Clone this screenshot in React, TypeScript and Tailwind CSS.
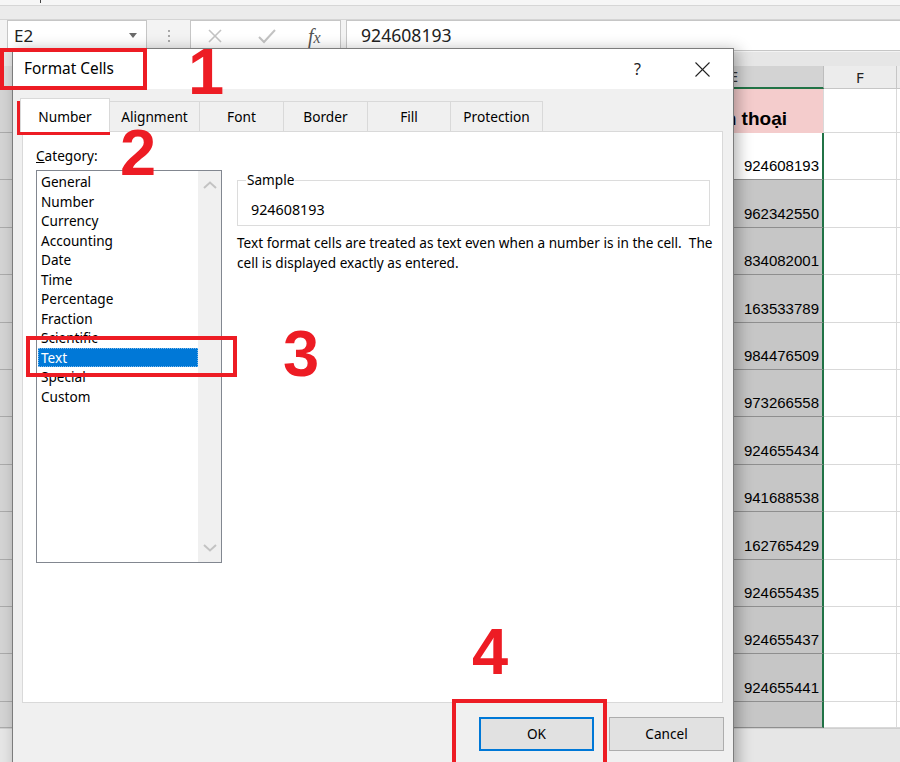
import React from "react";

const nums = [
  "924608193",
  "962342550",
  "834082001",
  "163533789",
  "984476509",
  "973266558",
  "924655434",
  "941688538",
  "162765429",
  "924655435",
  "924655437",
  "924655441",
];

const cats = [
  "General",
  "Number",
  "Currency",
  "Accounting",
  "Date",
  "Time",
  "Percentage",
  "Fraction",
  "Scientific",
  "Text",
  "Special",
  "Custom",
];

const tabs = [
  { label: "Number", w: "w-[90px]", active: true },
  { label: "Alignment", w: "w-[91px]", active: false },
  { label: "Font", w: "w-[85px]", active: false },
  { label: "Border", w: "w-[85px]", active: false },
  { label: "Fill", w: "w-[84px]", active: false },
  { label: "Protection", w: "w-[93px]", active: false },
];

function Chevron({ up }: { up?: boolean }) {
  return (
    <svg width="14" height="8" viewBox="0 0 14 8">
      <polyline
        points={up ? "1,7 7,1.5 13,7" : "1,1 7,6.5 13,1"}
        fill="none"
        stroke="#c3c3c3"
        strokeWidth="2"
      />
    </svg>
  );
}

function SheetRow({
  h,
  num,
  white,
}: {
  h: string;
  num?: string;
  white?: boolean;
}) {
  return (
    <div className={`flex ${h}`}>
      <div className="w-[12px] bg-[#d4d4d4] border-b border-[#ababab]" />
      <div className="w-[633px] bg-white" />
      <div
        className={`w-[179px] border-r-2 border-r-[#217346] border-b border-b-[#8e8e8e] flex items-end justify-end pr-[3px] pb-[4px] font-['Liberation_Sans',Arial,sans-serif] text-[15px] leading-[18px] ${
          white ? "bg-white" : "bg-[#c6c6c6]"
        }`}
      >
        {num}
      </div>
      <div className="w-[73px] bg-white border-b border-r border-[#d9d9d9]" />
      <div className="flex-1 bg-white border-b border-[#d9d9d9]" />
    </div>
  );
}

export default function App() {
  return (
    <div className="relative w-[900px] h-[762px] overflow-hidden bg-[#e6e6e6] font-['Noto_Sans',sans-serif] text-black">
      {/* ribbon bottom edge */}
      <div className="h-[6px] bg-[#f6f6f6] border-b border-[#d6d6d6]">
        <div className="ml-[40px] w-px h-[3px] bg-[#444]" />
      </div>
      <div className="h-[14px] bg-[#ebebeb] border-b border-[#d4d4d4]" />

      {/* formula bar */}
      <div className="h-[32px] flex bg-[#f3f3f3]">
        <div className="ml-[7px] w-[140px] h-[31px] bg-white border border-[#c6c6c6] flex items-center justify-between pl-[6px] pr-[9px]">
          <span className="text-[17px] leading-none text-[#222]">E2</span>
          <svg width="8" height="5" viewBox="0 0 8 5">
            <polygon points="0,0 8,0 4,5" fill="#6a6a6a" />
          </svg>
        </div>
        <div className="w-[43px] flex flex-col items-center justify-center gap-[3px]">
          <div className="w-[2px] h-[2px] bg-[#a8a8a8]" />
          <div className="w-[2px] h-[2px] bg-[#a8a8a8]" />
          <div className="w-[2px] h-[2px] bg-[#a8a8a8]" />
        </div>
        <div className="w-[151px] h-[31px] bg-white border border-[#c6c6c6] flex items-center pl-[16px]">
          <svg width="16" height="16" viewBox="0 0 16 16">
            <line x1="2" y1="2" x2="14" y2="14" stroke="#c3c3c3" strokeWidth="1.6" />
            <line x1="14" y1="2" x2="2" y2="14" stroke="#c3c3c3" strokeWidth="1.6" />
          </svg>
          <svg width="18" height="16" viewBox="0 0 18 16" className="ml-[35px]">
            <polyline points="1,9 6,14 17,2" fill="none" stroke="#c3c3c3" strokeWidth="2" />
          </svg>
          <span className="ml-[32px] font-['Liberation_Serif',serif] italic text-[20px] leading-none text-[#555]">
            f<span className="text-[16px]">x</span>
          </span>
        </div>
        <div className="ml-[5px] flex-1 h-[31px] bg-white border-y border-l border-[#c6c6c6] flex items-center pl-[14px] text-[17.6px] leading-none text-[#222]">
          924608193
        </div>
      </div>
      <div className="h-[14px] bg-[#e6e6e6]" />

      {/* column headers */}
      <div className="flex h-[23px]">
        <div className="w-[12px] bg-[#dcdcdc] border-b border-[#ababab]" />
        <div className="w-[633px] bg-[#e6e6e6]" />
        <div className="w-[179px] bg-[#d3d3d3] border-b-2 border-[#217346] border-r border-r-[#bdbdbd] flex items-center justify-center text-[15px] text-[#333]">
          E
        </div>
        <div className="w-[73px] bg-[#ececec] border-b border-r border-[#c6c6c6] flex items-center justify-center text-[15px] text-[#222]">
          F
        </div>
        <div className="flex-1 bg-[#ececec] border-b border-[#c6c6c6]" />
      </div>

      {/* header row */}
      <div className="flex h-[44px]">
        <div className="w-[12px] bg-[#d4d4d4] border-b border-[#ababab]" />
        <div className="w-[633px] bg-white" />
        <div className="w-[179px] bg-[#f4cccc] border-r border-[#d9d9d9] flex items-end justify-end pr-[36px] pb-[3px] font-['Liberation_Sans',Arial,sans-serif] font-bold text-[19px] leading-[22px] whitespace-nowrap">
          Số điện thoại
        </div>
        <div className="w-[73px] bg-white border-b border-r border-[#d9d9d9]" />
        <div className="flex-1 bg-white border-b border-[#d9d9d9]" />
      </div>

      {nums.map((n, i) => (
        <SheetRow key={i} h="h-[47.42px]" num={n} white={i === 0} />
      ))}
      <SheetRow h="h-[26px]" />

      {/* sheet tabs bar */}
      <div className="h-[40px] bg-[#e6e6e6] border-t border-[#cfcfcf]" />

      {/* Format Cells dialog */}
      <div className="absolute left-[12px] top-[48px] w-[722px] h-[730px] bg-[#f0f0f0] border border-[#7c7c7c] shadow-[4px_2px_14px_rgba(0,0,0,0.3)] flex flex-col">
        <div className="h-[40px] bg-white flex items-center">
          <span className="pl-[11px] text-[15.4px]">Format Cells</span>
          <span className="ml-auto text-[16px] text-[#222]">?</span>
          <svg width="15" height="15" viewBox="0 0 15 15" className="ml-[54px] mr-[23px]">
            <line x1="0.5" y1="0.5" x2="14.5" y2="14.5" stroke="#222" strokeWidth="1.1" />
            <line x1="14.5" y1="0.5" x2="0.5" y2="14.5" stroke="#222" strokeWidth="1.1" />
          </svg>
        </div>

        <div className="h-[42px] flex items-end pl-[7px]">
          {tabs.map((t) =>
            t.active ? (
              <div
                key={t.label}
                className={`${t.w} h-[34px] -mb-px relative z-10 bg-white border-x border-t border-[#d9d9d9] flex items-center justify-center text-[13.7px] pt-[4px]`}
              >
                {t.label}
              </div>
            ) : (
              <div
                key={t.label}
                className={`${t.w} h-[30px] -ml-px bg-[#f0f0f0] border-x border-t border-[#d9d9d9] flex items-center justify-center text-[13.7px] pt-[2px]`}
              >
                {t.label}
              </div>
            )
          )}
        </div>

        <div className="ml-[9px] w-[701px] h-[572px] bg-white border border-[#d9d9d9] flex">
          <div className="pl-[13px] pt-[14px]">
            <div className="text-[13.6px] leading-[20px]">
              <span className="underline">C</span>ategory:
            </div>
            <div className="mt-[4px] w-[186px] h-[393px] border border-[#828790] flex">
              <div className="flex-1 pt-[1px] pl-[1px]">
                {cats.map((c) =>
                  c === "Text" ? (
                    <div
                      key={c}
                      className="h-[19.5px] leading-[19.5px] bg-[#0078d7] text-white pl-[3px] text-[13.6px] outline outline-1 outline-dotted outline-[#7ab8ec] -outline-offset-1"
                    >
                      {c}
                    </div>
                  ) : (
                    <div key={c} className="h-[19.5px] leading-[19.5px] pl-[3px] text-[13.6px]">
                      {c}
                    </div>
                  )
                )}
              </div>
              <div className="w-[23px] bg-[#f0f0f0] flex flex-col items-center justify-between pt-[10px] pb-[10px]">
                <Chevron up />
                <Chevron />
              </div>
            </div>
          </div>

          <div className="ml-[15px] pt-[38px] w-[473px]">
            <fieldset className="border border-[#dcdcdc] pl-[13px] pb-[5px]">
              <legend className="ml-[-5px] px-[1px] text-[13.6px] leading-[20px]">Sample</legend>
              <div className="pt-[10px] text-[14.3px] leading-[20px]">924608193</div>
            </fieldset>
            <div className="mt-[7px] text-[13.6px] leading-[20px] whitespace-pre">
              <div>Text format cells are treated as text even when a number is in the cell.  The</div>
              <div>cell is displayed exactly as entered.</div>
            </div>
          </div>
        </div>

        <div className="flex justify-end gap-[15px] pt-[14px] pr-[9px]">
          <div className="w-[115px] h-[34px] bg-[#e1e1e1] border-2 border-[#0078d7] flex items-center justify-center text-[13.6px]">
            OK
          </div>
          <div className="w-[115px] h-[34px] bg-[#e1e1e1] border border-[#adadad] flex items-center justify-center text-[13.6px]">
            Cancel
          </div>
        </div>
      </div>

      {/* red annotations */}
      <div className="absolute left-0 top-[48px] w-[147px] h-[42px] border-4 border-[#ed1c24]" />
      <div className="absolute left-[17px] top-[101px] w-[93px] h-[34px] border-4 border-[#ed1c24]" />
      <div className="absolute left-[26px] top-[336px] w-[211px] h-[41px] border-4 border-[#ed1c24]" />
      <div className="absolute left-[452px] top-[699px] w-[155px] h-[80px] border-4 border-[#ed1c24]" />

      <div className="absolute left-[188px] top-[39px] font-['Liberation_Sans',Arial,sans-serif] font-bold text-[65px] leading-none text-[#ed1c24]">
        1
      </div>
      <div className="absolute left-[120px] top-[120px] font-['Liberation_Sans',Arial,sans-serif] font-bold text-[65px] leading-none text-[#ed1c24]">
        2
      </div>
      <div className="absolute left-[283px] top-[321px] font-['Liberation_Sans',Arial,sans-serif] font-bold text-[65px] leading-none text-[#ed1c24]">
        3
      </div>
      <div className="absolute left-[472px] top-[619px] font-['Liberation_Sans',Arial,sans-serif] font-bold text-[65px] leading-none text-[#ed1c24]">
        4
      </div>
    </div>
  );
}
